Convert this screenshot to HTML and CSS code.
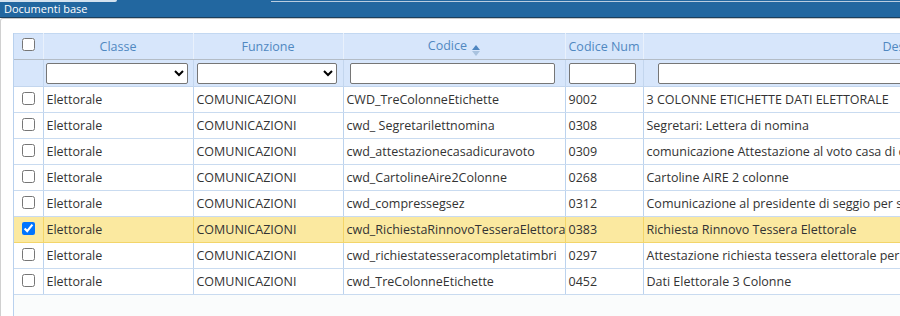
FILE: index.html
```html
<!DOCTYPE html>
<html lang="it">
<head>
<meta charset="utf-8"/>
<meta content="width=device-width, initial-scale=1.0" name="viewport"/>
<title>Documenti base</title>
<link rel="stylesheet" href="styles.css">
</head>
<body>
<div class="tabline">
  <div class="tab-left"></div>
  <div class="tab-gap"></div>
  <div class="tab-right"></div>
</div>
<div class="titlebar">Documenti base</div>
<div class="panel">
  <div class="grid">
    <table class="docs">
      <colgroup>
        <col class="c-chk"><col class="c-cls"><col class="c-fun">
        <col class="c-code"><col class="c-num"><col class="c-desc">
      </colgroup>
      <thead>
        <tr class="head">
          <th class="chk"><input type="checkbox"></th>
          <th>Classe</th>
          <th>Funzione</th>
          <th>Codice <span class="sort"><span class="up"></span><span class="down"></span></span></th>
          <th>Codice Num</th>
          <th class="th-desc">Descrizione</th>
        </tr>
        <tr class="filters">
          <th></th>
          <th><select class="f-sel"><option></option></select></th>
          <th><select class="f-sel f-sel2"><option></option></select></th>
          <th><input class="f-in f-code" type="text"></th>
          <th><input class="f-in f-num" type="text"></th>
          <th><input class="f-in f-desc" type="text"></th>
        </tr>
      </thead>
      <tbody id="rows"></tbody>
    </table>
  </div>
</div>
<script>
  const docs = [
    ["CWD_TreColonneEtichette", "9002", "3 COLONNE ETICHETTE DATI ELETTORALE"],
    ["cwd_ Segretarilettnomina", "0308", "Segretari: Lettera di nomina"],
    ["cwd_attestazionecasadicuravoto", "0309", "comunicazione Attestazione al voto casa di cura"],
    ["cwd_CartolineAire2Colonne", "0268", "Cartoline AIRE 2 colonne"],
    ["cwd_compressegsez", "0312", "Comunicazione al presidente di seggio per sezione"],
    ["cwd_RichiestaRinnovoTesseraElettorale", "0383", "Richiesta Rinnovo Tessera Elettorale", true],
    ["cwd_richiestatesseracompletatimbri", "0297", "Attestazione richiesta tessera elettorale per"],
    ["cwd_TreColonneEtichette", "0452", "Dati Elettorale 3 Colonne"]
  ];
  const tbody = document.getElementById("rows");
  docs.forEach(d => {
    const row = document.createElement("tr");
    if (d[3]) row.className = "selected";
    row.innerHTML = `
      <td class="chk"><input type="checkbox" ${d[3] ? "checked" : ""}></td>
      <td>Elettorale</td>
      <td>COMUNICAZIONI</td>
      <td>${d[0]}</td>
      <td>${d[1]}</td>
      <td>${d[2]}</td>`;
    tbody.appendChild(row);
  });
</script>
</body>
</html>
```

FILE: styles.css
```css
body {
  margin: 0;
  width: 900px;
  height: 316px;
  overflow: hidden;
  background: #fdfdfd;
  font-family: "Open Sans", "Liberation Sans", sans-serif;
}

.tabline { display: flex; height: 2px; background: #2267a0; }
.tab-left { width: 117px; background: #d4e2ef; border-radius: 0 0 2px 0; }
.tab-gap { width: 154px; }
.tab-right { flex: 1; background: #b9cde0; height: 1px; margin-top: 1px; }

.titlebar {
  height: 15px;
  background: #2267a0;
  color: #fff;
  font-size: 11px;
  line-height: 13px;
  padding-left: 4px;
  border-bottom: 1px solid #1b3f5d;
}

.panel {
  border-top: 1px solid #c9c9c9;
  border-left: 1px solid #d0d0d0;
  border-radius: 3px 0 0 0;
  background: #fff;
  padding: 14px 0 0 12px;
  height: 300px;
}

.grid {
  border-left: 1px solid #b9d1ee;
  background: #fafcfc;
  height: 100%;
  width: 1200px;
}

.docs {
  border-collapse: collapse;
  table-layout: fixed;
  width: 1180px;
  font-size: 12.5px;
  line-height: 16px;
  color: #333;
}

.c-chk { width: 29px; }
.c-cls, .c-fun { width: 150px; }
.c-code { width: 222px; }
.c-num { width: 78px; }
.c-desc { width: 551px; }

.docs th, .docs td {
  white-space: nowrap;
  overflow: hidden;
  padding: 0 3px;
  text-align: left;
}

.head th {
  height: 25px;
  background: #d7e6fb;
  color: #5088c1;
  font-weight: normal;
  text-align: center;
  border-top: 1px solid #c3d8f1;
  border-right: 1px solid #e9f1fc;
  border-bottom: 1px solid #b3bcc6;
}

.head th.th-desc { text-align: left; padding-left: 239px; }

.filters th {
  height: 26px;
  padding: 0;
  background: #d7e6fb;
  border-right: 1px solid #c3d6ee;
  border-bottom: 1px solid #c3d6ee;
}

.docs .chk { text-align: center; padding: 0; vertical-align: top; }
.chk input { display: block; margin: 4px auto 0; width: 13px; height: 13px; }
.docs td.chk input { margin-top: 5px; }

.f-sel {
  display: block;
  width: 142px;
  height: 21px;
  margin: 0 0 0 2px;
  font-size: 12px;
  border: 1px solid #767676;
  border-radius: 2px;
  background: #fff;
}
.f-sel2 { width: 140px; margin-left: 3px; }

.f-in {
  display: block;
  height: 21px;
  box-sizing: border-box;
  border: 1px solid #767676;
  border-radius: 2px;
  margin: 0;
}
.f-code { width: 205px; margin-left: 6px; }
.f-num { width: 67px; margin-left: 3px; }
.f-desc { width: 500px; margin-left: 14px; }

.sort {
  display: inline-flex;
  flex-direction: column;
  gap: 1px;
  vertical-align: 0;
  margin-left: 2px;
}
.sort .up { border: 4px solid transparent; border-top: 0; border-bottom: 5px solid #4f86c0; }
.sort .down { border: 4px solid transparent; border-bottom: 0; border-top: 5px solid #a8c2df; }

.docs tbody td {
  height: 25px;
  background: #fff;
  border-right: 1px solid #bcd3ee;
  border-bottom: 1px solid #c9dbf0;
}

.docs tbody tr.selected td {
  background: #fbe9a0;
  border-top: 1px solid #f3d56a;
  border-bottom-color: #f3d56a;
  border-right-color: #f3d56a;
}
```
